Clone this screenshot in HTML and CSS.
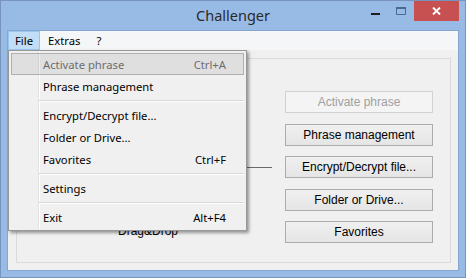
FILE: index.html
```html
<!DOCTYPE html>
<html>
<head>
<meta charset="utf-8">
<title>Challenger</title>
<link rel="stylesheet" href="styles.css">
</head>
<body>
<div class="window">
  <div class="titlebar">
    <div class="tb-spacer"></div>
    <div class="title">Challenger</div>
    <div class="controls">
      <div class="ctl ctl-min"><svg width="9" height="2" viewBox="0 0 9 2"><rect width="9" height="2" fill="#1e1e1e"/></svg></div>
      <div class="ctl ctl-max"><svg width="10" height="8" viewBox="0 0 10 8"><path d="M0.5 1.5H9.5V7.5H0.5Z" fill="none" stroke="#4a6890" stroke-width="1"/><rect x="0" y="0" width="10" height="2" fill="#4a6890"/></svg></div>
      <div class="ctl ctl-close"><svg width="9" height="8" viewBox="0 0 9 8"><path d="M1 0.5L8 7.5M8 0.5L1 7.5" stroke="#fff" stroke-width="1.9"/></svg></div>
    </div>
  </div>
  <div class="frame">
    <div class="menubar">
      <div class="mb-item mb-active">File</div>
      <div class="mb-item">Extras</div>
      <div class="mb-item">?</div>
    </div>
    <div class="client">
      <div class="panel">
        <div class="drop">
          <div class="drop-line"></div>
          <div class="drop-label">Drag&amp;Drop</div>
        </div>
        <div class="buttons">
          <div class="btn btn-disabled">Activate phrase</div>
          <div class="btn">Phrase management</div>
          <div class="btn">Encrypt/Decrypt file...</div>
          <div class="btn">Folder or Drive...</div>
          <div class="btn">Favorites</div>
        </div>
      </div>
    </div>
  </div>
  <div class="menu">
    <div class="mi mi-disabled mi-hot"><span>Activate phrase</span><span>Ctrl+A</span></div>
    <div class="mi"><span>Phrase management</span></div>
    <div class="sep"></div>
    <div class="mi"><span>Encrypt/Decrypt file...</span></div>
    <div class="mi"><span>Folder or Drive...</span></div>
    <div class="mi"><span>Favorites</span><span>Ctrl+F</span></div>
    <div class="sep"></div>
    <div class="mi"><span>Settings</span></div>
    <div class="sep"></div>
    <div class="mi"><span>Exit</span><span>Alt+F4</span></div>
  </div>
</div>
</body>
</html>
```
FILE: styles.css
```css
* { box-sizing: border-box; }
html, body { margin: 0; padding: 0; }
body { width: 466px; height: 278px; overflow: hidden; background: #97bae4; }

.window {
  position: relative;
  width: 466px;
  height: 278px;
  background: #98bbe6;
  border: 1px solid #7894bd;
  display: flex;
  flex-direction: column;
  font-family: "Noto Sans", "Open Sans", sans-serif;
}

.titlebar {
  height: 29px;
  display: grid;
  grid-template-columns: 1fr auto 1fr;
  align-items: start;
}
.title {
  align-self: center;
  font-family: "Noto Sans", sans-serif;
  font-size: 14.5px;
  color: #2a2a2a;
  line-height: 29px;
}
.controls {
  display: flex;
  justify-content: flex-end;
  padding-right: 6px;
}
.ctl {
  height: 20px;
  width: 26px;
  display: flex;
  justify-content: center;
}
.ctl svg { display: block; }
.ctl-min { padding-top: 12px; }
.ctl-max { padding-top: 6px; }
.ctl-close {
  width: 45px;
  background: #c75050;
  padding-top: 6px;
}

.frame {
  flex: 1;
  margin: 0 6px 6px 6px;
  border: 1px solid #87a6cf;
  display: flex;
  flex-direction: column;
}

.menubar {
  height: 19px;
  background: #f5f6f7;
  display: flex;
  font-size: 11.25px;
  color: #000;
}
.mb-item {
  padding: 0 7px 0 7px;
  line-height: 19px;
  border: 1px solid transparent;
  display: flex;
  align-items: center;
}
.mb-active {
  background: #c2ddf6;
  border-color: #99c6f0;
  padding: 0 6px 0 6px;
}

.client {
  flex: 1;
  background: #f0f0f0;
  padding: 8px 7px 7px 8px;
  display: flex;
}
.panel {
  flex: 1;
  border: 1px solid #dadada;
  display: flex;
  padding-top: 32px;
}
.drop {
  flex: 1;
  display: flex;
  flex-direction: column;
  align-items: center;
  padding: 0 13px 0 7px;
  margin-top: -32px;
}
.drop-line {
  width: 100%;
  height: 109px;
  border-bottom: 1px solid #6a6a6a;
}
.drop-label {
  margin-top: 56px;
  font-family: "Liberation Sans Narrow", "Liberation Sans", Arial, sans-serif;
  font-size: 12px;
  color: #000;
}
.buttons {
  width: 148px;
  margin-right: 17px;
  display: flex;
  flex-direction: column;
  gap: 10.5px;
}
.btn {
  height: 22px;
  border: 1px solid #acacac;
  background: linear-gradient(#f0f0f0, #e5e5e5);
  display: flex;
  align-items: center;
  justify-content: center;
  font-family: "Liberation Sans Narrow", "Liberation Sans", Arial, sans-serif;
  font-size: 12px;
  color: #000;
}
.btn-disabled {
  border-color: #d2d2d2;
  background: #f4f4f4;
  color: #a0a0a0;
}

.menu {
  position: absolute;
  left: 7px;
  top: 49px;
  width: 239px;
  padding: 2px;
  border: 1px solid #979797;
  background:
    linear-gradient(to right, transparent 29px, #e2e2e2 29px, #e2e2e2 30px, #ffffff 30px, #ffffff 31px, transparent 31px),
    #f0f0f0;
  box-shadow: 2px 2px 3px rgba(0, 0, 0, 0.38);
  font-size: 11.25px;
  color: #000;
}
.mi {
  height: 22px;
  display: flex;
  justify-content: space-between;
  align-items: center;
  padding: 0 17px 0 31px;
  border: 1px solid transparent;
}
.mi-disabled { color: #6d6d6d; }
.mi-hot {
  background: rgba(0, 0, 0, 0.07);
  border-color: #b0b0b0;
}
.sep {
  height: 7px;
  margin-left: 28px;
  padding-top: 3px;
}
.sep::before {
  content: "";
  display: block;
  height: 1px;
  background: #d7d7d7;
  border-bottom: 1px solid #fff;
  box-sizing: content-box;
}
```
